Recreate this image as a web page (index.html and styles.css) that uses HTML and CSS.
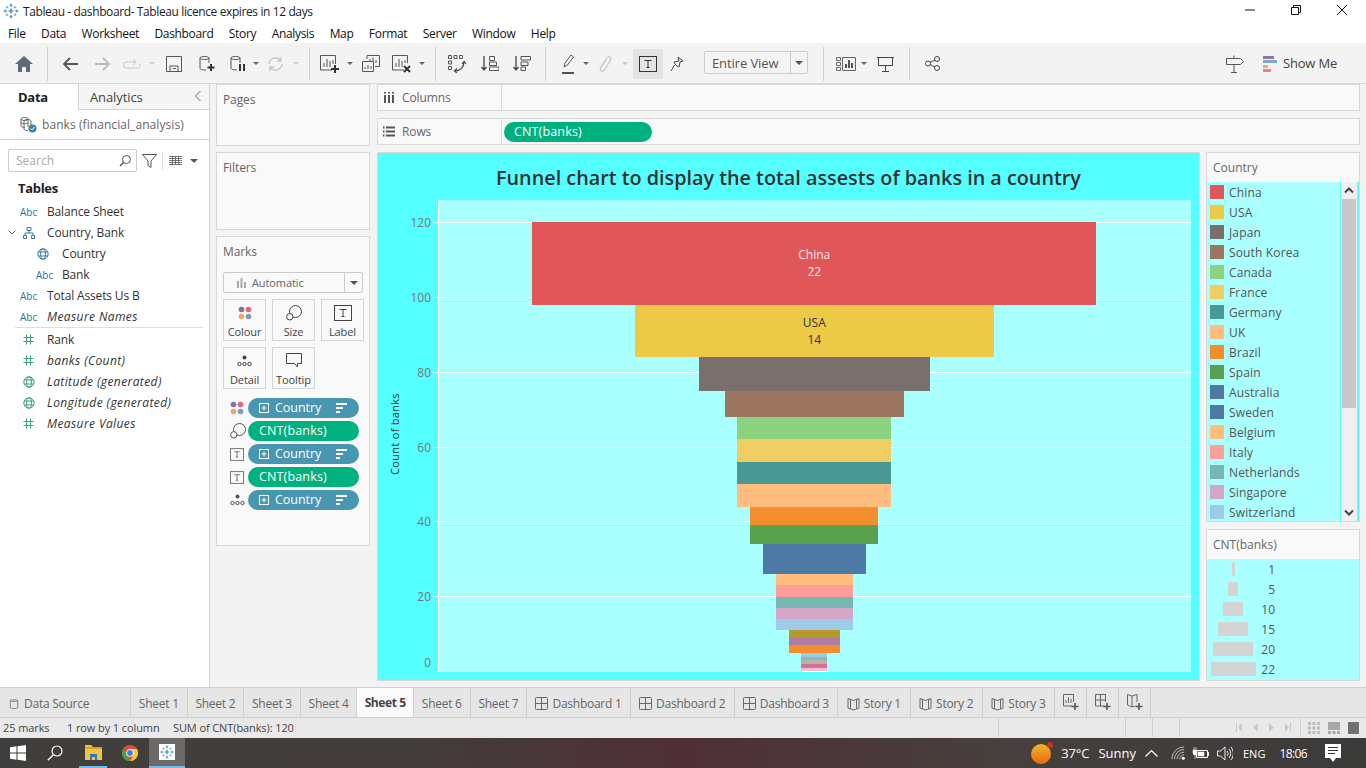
FILE: index.html
```html
<!DOCTYPE html>
<html lang="en">

<head>
    <meta charset="UTF-8">
    <meta name="viewport" content="width=device-width, initial-scale=1.0">
    <title>Tableau - dashboard</title>
    <link rel="stylesheet" href="styles.css">
</head>

<body>
    <!-- shared icons -->
    <svg class="sprite" xmlns="http://www.w3.org/2000/svg">
        <symbol id="i-logo" viewBox="0 0 16 16">
            <path d="M8 5.500v5M5.500 8h5" fill="none" stroke="#2f7ca8" stroke-width="1.2"/>
            <path d="M8 .5v3.500M6.500 2.200h3M8 12v3.500M6.500 13.800h3M.5 8h3.500M2.200 6.500v3M12 8h3.500M13.800 6.500v3" fill="none" stroke="#3f8cb8" stroke-width="1"/>
            <path d="M4 3v2.500M2.800 4.200h2.500M12 3v2.500M10.800 4.200h2.500M4 10.500V13M2.800 11.800h2.500M12 10.500V13M10.800 11.800h2.500" fill="none" stroke="#6aa9cc" stroke-width="1"/>
        </symbol>
        <symbol id="i-db" viewBox="0 0 16 16">
            <path d="M3 3.500C3 2 13 2 13 3.500V13C13 14.500 3 14.500 3 13ZM3 3.500C3 5 13 5 13 3.500" fill="none" stroke="currentColor"/>
        </symbol>
        <symbol id="i-t" viewBox="0 0 18 16">
            <rect x=".5" y=".5" width="17" height="15" fill="none" stroke="currentColor"/>
            <path d="M5.500 4.500h7M9 4.500v7M7.500 11.500h3" fill="none" stroke="currentColor"/>
        </symbol>
        <symbol id="i-dots" viewBox="0 0 14 14">
            <circle cx="3.500" cy="3.500" r="2.800" fill="#8a6f9c"/><circle cx="10.500" cy="3.500" r="2.800" fill="#e8657a"/>
            <circle cx="3.500" cy="10.500" r="2.800" fill="#f0a46c"/><circle cx="10.500" cy="10.500" r="2.800" fill="#7c9cc4"/>
        </symbol>
        <symbol id="i-size" viewBox="0 0 16 16">
            <circle cx="9.500" cy="6.500" r="6" fill="none" stroke="currentColor"/>
            <circle cx="3.800" cy="11.800" r="3.200" fill="#f9f9f9" stroke="currentColor"/>
        </symbol>
        <symbol id="i-detail" viewBox="0 0 15 12">
            <circle cx="7.500" cy="2.500" r="2" fill="currentColor"/>
            <circle cx="2.500" cy="9" r="1.700" fill="none" stroke="currentColor"/><circle cx="7.500" cy="9" r="1.700" fill="none" stroke="currentColor"/><circle cx="12.500" cy="9" r="1.700" fill="none" stroke="currentColor"/>
        </symbol>
        <symbol id="i-sorted" viewBox="0 0 12 10">
            <path d="M0 1h11M0 5h7M0 9h4" fill="none" stroke="#fff" stroke-width="2"/>
        </symbol>
        <symbol id="i-plusbox" viewBox="0 0 10 10">
            <rect x=".5" y=".5" width="9" height="9" fill="none" stroke="#fff"/>
            <path d="M5 2.500v5M2.500 5h5" fill="none" stroke="#fff"/>
        </symbol>
        <symbol id="i-globe" viewBox="0 0 12 12">
            <circle cx="6" cy="6" r="5.200" fill="none" stroke="currentColor"/>
            <ellipse cx="6" cy="6" rx="2.400" ry="5.200" fill="none" stroke="currentColor"/>
            <path d="M1 4h10M1 8h10" fill="none" stroke="currentColor"/>
        </symbol>
        <symbol id="i-hash" viewBox="0 0 11 11">
            <path d="M3.500 .5v10M7.500 .5v10M.5 3.500h10M.5 7.500h10" fill="none" stroke="currentColor"/>
        </symbol>
        <symbol id="i-dash" viewBox="0 0 13 13">
            <rect x=".5" y=".5" width="12" height="12" rx="1" fill="none" stroke="currentColor"/>
            <path d="M6.500 .5v12M.5 6.500h12" fill="none" stroke="currentColor"/>
        </symbol>
        <symbol id="i-book" viewBox="0 0 13 14">
            <path d="M1 1.500L6.500 3.500L12 1.500V11L6.500 13L1 11ZM3.500 2.500V11.500M9.500 2.500V11.500" fill="none" stroke="currentColor"/>
        </symbol>
    </svg>

    <div class="app">
        <header class="titlebar">
            <svg class="logo"><use href="#i-logo"/></svg>
            <span class="title-text">Tableau - dashboard- Tableau licence expires in 12 days</span>
            <div class="win-buttons">
                <svg width="12" height="12" viewBox="0 0 12 12"><path d="M1 6h10" stroke="#111"/></svg>
                <svg width="12" height="12" viewBox="0 0 12 12"><path d="M1.500 3.500h7v7h-7zM3.500 3.500v-2h7v7h-2" fill="none" stroke="#111"/></svg>
                <svg width="12" height="12" viewBox="0 0 12 12"><path d="M1 1l10 10M11 1L1 11" stroke="#111"/></svg>
            </div>
        </header>

        <nav class="menubar">
            <span>File</span><span>Data</span><span>Worksheet</span><span>Dashboard</span><span>Story</span><span>Analysis</span><span>Map</span><span>Format</span><span>Server</span><span>Window</span><span>Help</span>
        </nav>

        <div class="toolbar">
            <div class="tb w48"><svg width="18" height="16" viewBox="0 0 18 16"><path d="M9 0L0 8h3v8h4v-5h4v5h4V8h3z" fill="#5b6b7a"/></svg></div>
            <i class="tb-sep"></i>
            <div class="tb w6"></div>
            <div class="tb w32"><svg width="17" height="14" viewBox="0 0 17 14"><path d="M16 7H2M8 1L2 7l6 6" fill="none" stroke="#555" stroke-width="1.800"/></svg></div>
            <div class="tb w32"><svg width="17" height="14" viewBox="0 0 17 14"><path d="M1 7h14M9 1l6 6-6 6" fill="none" stroke="#bbb" stroke-width="1.800"/></svg></div>
            <div class="tb w28"><svg width="18" height="10" viewBox="0 0 18 10"><path d="M12 3H3.500a2.500 2.500 0 0 0 0 6h11a2.500 2.500 0 0 0 2-4M10 0l3 3-3 3" fill="none" stroke="#c4c4c4"/></svg></div>
            <div class="tb w12"><i class="caret off"></i></div>
            <div class="tb w32"><svg width="16" height="16" viewBox="0 0 16 16"><path d="M.5.500h15v15H.5zM4 15.500V10h8v5.500M7 12.500h3" fill="none" stroke="#555"/></svg></div>
            <div class="tb w34"><svg width="16" height="17" viewBox="0 0 16 17"><path d="M1 3C1 1 10 1 10 3V8M1 3C1 5 10 5 10 3M1 3V13C1 14.500 4 15 7 15" fill="none" stroke="#555"/><path d="M12 9v7M8.500 12.500h7" stroke="#333" stroke-width="2"/></svg></div>
            <div class="tb w28"><svg width="16" height="17" viewBox="0 0 16 17"><path d="M1 3C1 1 10 1 10 3V8M1 3C1 5 10 5 10 3M1 3V13C1 14.500 4 15 7 15" fill="none" stroke="#555"/><path d="M10 9v7M14 9v7" stroke="#333" stroke-width="2"/></svg></div>
            <div class="tb w8"><i class="caret"></i></div>
            <div class="tb w30"><svg width="17" height="16" viewBox="0 0 17 16"><path d="M2 8a6.500 6.500 0 0 1 12-3M15 8a6.500 6.500 0 0 1-12 3M14 1v4h-4M3 15v-4h4" fill="none" stroke="#c4c4c4" stroke-width="1.300"/></svg></div>
            <div class="tb w12"><i class="caret off"></i></div>
            <div class="tb w7"></div>
            <i class="tb-sep"></i>

            <div class="tb w4"></div>
            <div class="tb w32"><svg width="20" height="18" viewBox="0 0 20 18"><path d="M12 15H.5V.5h15V9M4 12V8M7 12V4M10 12V6M13 9V5" fill="none" stroke="#555"/><path d="M15 10v8M11 14h8" stroke="#333" stroke-width="2"/></svg></div>
            <div class="tb w8"><i class="caret"></i></div>
            <div class="tb w34"><svg width="18" height="17" viewBox="0 0 18 17"><path d="M5 4V.5h12.500v11H13M8 8V4M11 8V2.500M14 8V5" fill="none" stroke="#555"/><path d="M.5 6.500h11v10H.5zM3 14v-2M6 14v-4M9 14v-3" fill="#f3f3f3" stroke="#555"/></svg></div>
            <div class="tb w28"><svg width="20" height="18" viewBox="0 0 20 18"><path d="M12 15H.5V.5h15V8M4 12V8M7 12V4M10 12V6M13 8V5" fill="none" stroke="#555"/><path d="M12 11l6 6M18 11l-6 6" stroke="#333" stroke-width="2"/></svg></div>
            <div class="tb w12"><i class="caret"></i></div>
            <div class="tb w7"></div>
            <i class="tb-sep"></i>

            <div class="tb w5"></div>
            <div class="tb w32"><svg width="18" height="18" viewBox="0 0 18 18"><path d="M.5.500h3v3h-3zM6 .5h3v3H6zM11.500.5h3v3h-3zM.5 6h3v3h-3zM.5 11.500h3v3h-3z" fill="none" stroke="#555"/><path d="M16 7a9 9 0 0 1-9 9M14 9l2-2.500L18 9M9 13.500L6.500 16 9 18" fill="none" stroke="#444" stroke-width="1.200"/></svg></div>
            <div class="tb w34"><svg width="18" height="17" viewBox="0 0 18 17"><path d="M3 1v14M.5 12L3 15l2.500-3" fill="none" stroke="#444" stroke-width="1.300"/><path d="M8.500 1.500h5v4h-5zM8.500 7h7v3.500h-7zM8.500 12h9.500v3.500H8.500z" fill="none" stroke="#555"/></svg></div>
            <div class="tb w30"><svg width="18" height="17" viewBox="0 0 18 17"><path d="M3 1v14M.5 12L3 15l2.500-3" fill="none" stroke="#444" stroke-width="1.300"/><path d="M8 1.500h9.500V5H8zM8 7h7v3.500H8zM8 12h4.500v3.500H8z" fill="none" stroke="#555"/></svg></div>
            <div class="tb w8"></div>
            <i class="tb-sep"></i>

            <div class="tb w8"></div>
            <div class="tb w28"><svg width="14" height="20" viewBox="0 0 14 20"><path d="M3 13l1-4 6-8 2.500 2-6 8z" fill="none" stroke="#555"/><path d="M1 19h12" stroke="#555" stroke-width="2"/></svg></div>
            <div class="tb w8"><i class="caret"></i></div>
            <div class="tb w30"><svg width="15" height="18" viewBox="0 0 15 18"><path d="M3.500 11L9 3c1.700-2.500 5-.7 3.500 2L6.500 15c-1.500 2.500-5.500.5-4-2.200L8 5" fill="none" stroke="#c4c4c4" stroke-width="1.200"/></svg></div>
            <div class="tb w10"><i class="caret off"></i></div>
            <div class="tb tb-active"><svg class="ic-t" width="18" height="16"><use href="#i-t"/></svg></div>
            <div class="tb w28"><svg width="14" height="16" viewBox="0 0 14 16"><path d="M8 1l5 4-3 1-1 5-2-1-2-2-1-2 5-1zM4.500 9L1 15" fill="none" stroke="#444"/></svg></div>
            <div class="fit-select"><span>Entire View</span><b><i class="caret dark"></i></b></div>
            <div class="tb w15"></div>
            <i class="tb-sep"></i>

            <div class="tb w8"></div>
            <div class="tb w28"><svg width="20" height="14" viewBox="0 0 20 14"><path d="M.5.500h4v3h-4zM.5 5.500h4v3h-4zM.5 10.500h4v3h-4zM6.500.5h13v13h-13z" fill="none" stroke="#666"/><path d="M10 11V7M13 11V3M16 11V6" stroke="#555" stroke-width="2"/></svg></div>
            <div class="tb w8"><i class="caret"></i></div>
            <div class="tb w34"><svg width="17" height="16" viewBox="0 0 17 16"><path d="M0 1.500h17M1.500 1.500v8h14v-8M8.500 9.500V15M5 15.500h7" fill="none" stroke="#444"/></svg></div>
            <div class="tb w7"></div>
            <i class="tb-sep"></i>

            <div class="tb w6"></div>
            <div class="tb w32"><svg width="15" height="15" viewBox="0 0 15 15"><circle cx="3" cy="7.500" r="2.500" fill="none" stroke="#444"/><circle cx="12" cy="3" r="2.500" fill="none" stroke="#444"/><circle cx="12" cy="12" r="2.500" fill="none" stroke="#444"/><path d="M5 6.500L10 4M5 8.500l5 2.500" stroke="#444"/></svg></div>

            <div class="toolbar-right">
                <svg width="18" height="18" viewBox="0 0 18 18"><path d="M.5 3.500h14l3 3-3 3H.5zM8 .5v3M8 9.500v8M5 17.500h6" fill="none" stroke="#555"/></svg>
                <svg class="showme-ic" width="14" height="16" viewBox="0 0 14 16"><path d="M0 0h11v3H0z" fill="#8a7aa6"/><path d="M0 4h14v3H0z" fill="#7fa6cf"/><path d="M0 9h5v3H0z" fill="#f0a878"/><path d="M0 13h8v3H0z" fill="#f07f86"/></svg>
                <span>Show Me</span>
            </div>
        </div>

        <main class="main">
            <!-- Data pane -->
            <aside class="data-pane">
                <div class="pane-tabs">
                    <div class="pane-tab active">Data</div>
                    <div class="pane-tab">Analytics<svg class="collapse" width="8" height="12" viewBox="0 0 8 12"><path d="M6.500 1L1.500 6l5 5" fill="none" stroke="#666"/></svg></div>
                </div>
                <div class="source">
                    <svg width="17" height="17" viewBox="0 0 17 17"><path d="M1 3C1 1 8 1 8 3V11M1 3V10C1 11 3 11.500 5 11.500M1 3C1 5 8 5 8 3M1 6.500C1 8 5 8 8 7" fill="none" stroke="#666"/><path d="M4 5C4 3 11 3 11 5V10M4 5V13C4 14 6 14.500 8 14.500" fill="none" stroke="#666"/><circle cx="12.500" cy="12.500" r="4" fill="#3b84a8"/><path d="M10.500 12.500l1.500 1.500 2.500-3" fill="none" stroke="#fff"/></svg>
                    <span>banks (financial_analysis)</span>
                </div>
                <div class="search-row">
                    <div class="search"><span>Search</span><svg width="13" height="13" viewBox="0 0 13 13"><circle cx="7.500" cy="5.500" r="4" fill="none" stroke="#555"/><path d="M4.500 8.500L1 12" stroke="#555" stroke-width="1.400"/></svg></div>
                    <svg class="funnel-ic" width="15" height="14" viewBox="0 0 15 14"><path d="M.5.500h14L9 7v6.500L6 11.500V7z" fill="none" stroke="#555"/></svg>
                    <i class="search-sep"></i>
                    <svg width="13" height="9" viewBox="0 0 13 9"><path d="M0 .5h13M0 2.500h13M0 4.500h13M0 6.500h13M0 8.500h13M3.500 0v9M6.500 0v9M9.500 0v9" stroke="#555" fill="none" stroke-width=".8"/></svg>
                    <i class="caret dark list-caret"></i>
                </div>
                <h3 class="tables">Tables</h3>
                <ul class="fields">
                    <li><span class="abc">Abc</span>Balance Sheet</li>
                    <li class="has-chevron"><svg class="chev" width="8" height="5" viewBox="0 0 8 5"><path d="M.5.500L4 4 7.500.5" fill="none" stroke="#666"/></svg><svg class="ficon blue" width="12" height="12" viewBox="0 0 12 12"><path d="M4 .5h4v3H4zM.5 8.500h3v3h-3zM8.500 8.500h3v3h-3zM6 3.500V6M2 8.500V6h8v2.500" fill="none" stroke="currentColor"/></svg>Country, Bank</li>
                    <li class="child"><svg class="ficon blue" width="12" height="12"><use href="#i-globe"/></svg>Country</li>
                    <li class="child"><span class="abc">Abc</span>Bank</li>
                    <li><span class="abc">Abc</span>Total Assets Us B</li>
                    <li class="calc"><span class="abc">Abc</span>Measure Names</li>
                    <li class="divider"></li>
                    <li><svg class="ficon green" width="11" height="11"><use href="#i-hash"/></svg>Rank</li>
                    <li class="calc"><svg class="ficon green" width="11" height="11"><use href="#i-hash"/></svg>banks (Count)</li>
                    <li class="calc"><svg class="ficon green" width="12" height="12"><use href="#i-globe"/></svg>Latitude (generated)</li>
                    <li class="calc"><svg class="ficon green" width="12" height="12"><use href="#i-globe"/></svg>Longitude (generated)</li>
                    <li class="calc"><svg class="ficon green" width="11" height="11"><use href="#i-hash"/></svg>Measure Values</li>
                </ul>
            </aside>

            <!-- Pages / Filters / Marks -->
            <section class="cards">
                <div class="card pages">Pages</div>
                <div class="card filters">Filters</div>
                <div class="card marks">
                    <div class="marks-title">Marks</div>
                    <div class="mark-type">
                        <svg width="11" height="10" viewBox="0 0 11 10"><path d="M1 3h2v7H1zM4.500 0h2v10h-2zM8 4h2v6H8z" fill="#aaa"/></svg>
                        <span>Automatic</span><b><i class="caret dark"></i></b>
                    </div>
                    <div class="mark-buttons">
                        <div class="mark-btn"><svg width="14" height="14"><use href="#i-dots"/></svg>Colour</div>
                        <div class="mark-btn"><svg width="16" height="16"><use href="#i-size"/></svg>Size</div>
                        <div class="mark-btn"><svg width="18" height="16"><use href="#i-t"/></svg>Label</div>
                        <div class="mark-btn"><svg width="15" height="12"><use href="#i-detail"/></svg>Detail</div>
                        <div class="mark-btn"><svg width="16" height="15" viewBox="0 0 16 15"><path d="M.5.500h15v10h-4v3.500l-3-3.500H.5z" fill="none" stroke="currentColor"/></svg>Tooltip</div>
                    </div>
                    <ul class="mark-pills">
                        <li><svg width="14" height="14"><use href="#i-dots"/></svg><span class="pill dim"><svg class="pb" width="10" height="10"><use href="#i-plusbox"/></svg>Country<svg class="ps" width="12" height="10"><use href="#i-sorted"/></svg></span></li>
                        <li><svg width="16" height="16"><use href="#i-size"/></svg><span class="pill meas">CNT(banks)</span></li>
                        <li><svg width="14" height="13"><use href="#i-t"/></svg><span class="pill dim"><svg class="pb" width="10" height="10"><use href="#i-plusbox"/></svg>Country<svg class="ps" width="12" height="10"><use href="#i-sorted"/></svg></span></li>
                        <li><svg width="14" height="13"><use href="#i-t"/></svg><span class="pill meas">CNT(banks)</span></li>
                        <li><svg width="15" height="12"><use href="#i-detail"/></svg><span class="pill dim"><svg class="pb" width="10" height="10"><use href="#i-plusbox"/></svg>Country<svg class="ps" width="12" height="10"><use href="#i-sorted"/></svg></span></li>
                    </ul>
                </div>
            </section>

            <!-- Shelves and view -->
            <section class="work">
                <div class="shelf">
                    <div class="shelf-label"><svg width="12" height="11" viewBox="0 0 12 11"><path d="M2 3v8M6 3v8M10 3v8M2 0v1.500M6 0v1.500M10 0v1.500" stroke="#555" stroke-width="2"/></svg>Columns</div>
                    <div class="shelf-body"></div>
                </div>
                <div class="shelf">
                    <div class="shelf-label"><svg width="12" height="11" viewBox="0 0 12 11"><path d="M3 1.500h9M3 5.500h9M3 9.500h9M0 1.500h1.500M0 5.500h1.500M0 9.500h1.500" stroke="#555" stroke-width="2"/></svg>Rows</div>
                    <div class="shelf-body"><span class="pill meas wide">CNT(banks)</span></div>
                </div>

                <div class="view-row">
                    <div class="viz">
                        <h1 class="viz-title">Funnel chart to display the total assests of banks in a country</h1>
                        <div class="chart">
                            <div class="axis-title">Count of banks</div>
                            <div class="plot">
                                <div class="funnel">
                                    <div class="bar c1 lit" style="--n:22"><span>China</span><span>22</span></div>
                                    <div class="bar c2" style="--n:14"><span>USA</span><span>14</span></div>
                                    <div class="bar c3" style="--n:9"></div>
                                    <div class="bar c4" style="--n:7"></div>
                                    <div class="bar c5" style="--n:6"></div>
                                    <div class="bar c6" style="--n:6"></div>
                                    <div class="bar c7" style="--n:6"></div>
                                    <div class="bar c8" style="--n:6"></div>
                                    <div class="bar c9" style="--n:5"></div>
                                    <div class="bar c10" style="--n:5"></div>
                                    <div class="bar c11" style="--n:4"></div>
                                    <div class="bar c11" style="--n:4"></div>
                                    <div class="bar c8" style="--n:3"></div>
                                    <div class="bar c14" style="--n:3"></div>
                                    <div class="bar c15" style="--n:3"></div>
                                    <div class="bar c16" style="--n:3"></div>
                                    <div class="bar c17" style="--n:3"></div>
                                    <div class="bar c18" style="--n:2"></div>
                                    <div class="bar c19" style="--n:2"></div>
                                    <div class="bar c9" style="--n:2"></div>
                                    <div class="bar c17" style="--n:1"></div>
                                    <div class="bar c20" style="--n:1"></div>
                                    <div class="bar c21" style="--n:1"></div>
                                    <div class="bar c22" style="--n:1"></div>
                                    <div class="bar c23" style="--n:1"></div>
                                </div>
                            </div>
                            <!-- axis ticks lie over the plot -->
                            <div class="grid" style="top:22px"><span>120</span></div>
                            <div class="grid" style="top:97px"><span>100</span></div>
                            <div class="grid" style="top:172px"><span>80</span></div>
                            <div class="grid" style="top:247px"><span>60</span></div>
                            <div class="grid" style="top:321px"><span>40</span></div>
                            <div class="grid" style="top:396px"><span>20</span></div>
                            <div class="grid last" style="top:471px"><span>0</span></div>
                        </div>
                    </div>

                    <div class="legends">
                        <div class="legend country">
                            <div class="legend-title">Country</div>
                            <div class="legend-body">
                                <ul class="legend-list">
                                    <li><i class="c1"></i>China</li>
                                    <li><i class="c2"></i>USA</li>
                                    <li><i class="c3"></i>Japan</li>
                                    <li><i class="c4"></i>South Korea</li>
                                    <li><i class="c5"></i>Canada</li>
                                    <li><i class="c6"></i>France</li>
                                    <li><i class="c7"></i>Germany</li>
                                    <li><i class="c8"></i>UK</li>
                                    <li><i class="c9"></i>Brazil</li>
                                    <li><i class="c10"></i>Spain</li>
                                    <li><i class="c11"></i>Australia</li>
                                    <li><i class="c11"></i>Sweden</li>
                                    <li><i class="c8"></i>Belgium</li>
                                    <li><i class="c14"></i>Italy</li>
                                    <li><i class="c15"></i>Netherlands</li>
                                    <li><i class="c16"></i>Singapore</li>
                                    <li><i class="c17"></i>Switzerland</li>
                                </ul>
                                <div class="scrollbar">
                                    <svg width="16" height="17" viewBox="0 0 16 17"><path d="M4 10.500l4-4 4 4" fill="none" stroke="#444" stroke-width="2"/></svg>
                                    <div class="thumb"></div>
                                    <svg class="down" width="16" height="17" viewBox="0 0 16 17"><path d="M4 6.500l4 4 4-4" fill="none" stroke="#444" stroke-width="2"/></svg>
                                </div>
                            </div>
                        </div>
                        <div class="legend sizes">
                            <div class="legend-title">CNT(banks)</div>
                            <ul class="size-list">
                                <li><span class="size-cell"><i style="width:3px"></i></span><b>1</b></li>
                                <li><span class="size-cell"><i style="width:10px"></i></span><b>5</b></li>
                                <li><span class="size-cell"><i style="width:20px"></i></span><b>10</b></li>
                                <li><span class="size-cell"><i style="width:30px"></i></span><b>15</b></li>
                                <li><span class="size-cell"><i style="width:40px"></i></span><b>20</b></li>
                                <li><span class="size-cell"><i style="width:45px"></i></span><b>22</b></li>
                            </ul>
                        </div>
                    </div>
                </div>
            </section>
        </main>

        <!-- Sheet tabs -->
        <div class="tabs">
            <div class="tab t-source"><svg width="12" height="14"><use href="#i-db"/></svg>Data Source</div>
            <div class="tab t-sheet">Sheet 1</div>
            <div class="tab t-sheet">Sheet 2</div>
            <div class="tab t-sheet">Sheet 3</div>
            <div class="tab t-sheet">Sheet 4</div>
            <div class="tab t-sheet current">Sheet 5</div>
            <div class="tab t-sheet">Sheet 6</div>
            <div class="tab t-sheet">Sheet 7</div>
            <div class="tab t-dash"><svg width="13" height="13"><use href="#i-dash"/></svg>Dashboard 1</div>
            <div class="tab t-dash"><svg width="13" height="13"><use href="#i-dash"/></svg>Dashboard 2</div>
            <div class="tab t-dash"><svg width="13" height="13"><use href="#i-dash"/></svg>Dashboard 3</div>
            <div class="tab t-story"><svg width="13" height="14"><use href="#i-book"/></svg>Story 1</div>
            <div class="tab t-story"><svg width="13" height="14"><use href="#i-book"/></svg>Story 2</div>
            <div class="tab t-story"><svg width="13" height="14"><use href="#i-book"/></svg>Story 3</div>
            <div class="tab t-add"><svg width="16" height="17" viewBox="0 0 16 17"><path d="M9 12H.5V.5h10V8M3 9V6M5.500 9V3M8 9V5" fill="none" stroke="#666"/><path d="M12 9v7M8.500 12.500h7" stroke="#555" stroke-width="1.600"/></svg></div>
            <div class="tab t-add"><svg width="16" height="17" viewBox="0 0 16 17"><path d="M9 12H.5V.5h10V8M5.500.5V12M.5 6h10" fill="none" stroke="#666"/><path d="M12 9v7M8.500 12.500h7" stroke="#555" stroke-width="1.600"/></svg></div>
            <div class="tab t-add"><svg width="16" height="17" viewBox="0 0 16 17"><path d="M.5.500L5 2l5-1.500V8M.5.500V11L5 13l3-1M5 2v11" fill="none" stroke="#666"/><path d="M12 9v7M8.500 12.500h7" stroke="#555" stroke-width="1.600"/></svg></div>
        </div>

        <!-- Status bar -->
        <div class="status">
            <span class="st-marks">25 marks</span>
            <span class="st-rows">1 row by 1 column</span>
            <span>SUM of CNT(banks): 120</span>
            <div class="status-cells"><i></i><i></i><i></i><i></i></div>
            <div class="status-nav">
                <svg width="6" height="9" viewBox="0 0 6 9"><path d="M0 0h1v9H0zM6 0v9L2 4.500z" fill="#c8c8c8"/></svg>
                <svg width="5" height="9" viewBox="0 0 5 9"><path d="M5 0v9L0 4.500z" fill="#c8c8c8"/></svg>
                <svg width="5" height="9" viewBox="0 0 5 9"><path d="M0 0v9l5-4.500z" fill="#c8c8c8"/></svg>
                <svg width="6" height="9" viewBox="0 0 6 9"><path d="M5 0h1v9H5zM0 0v9l4-4.500z" fill="#c8c8c8"/></svg>
            </div>
            <div class="status-views">
                <svg width="12" height="12" viewBox="0 0 12 12"><path d="M0 0h3v3H0zM4.500 0h3v3h-3zM9 0h3v3H9zM0 4.500h3v3H0zM4.500 4.500h3v3h-3zM9 4.500h3v3H9zM0 9h3v3H0zM4.500 9h3v3h-3zM9 9h3v3H9z" fill="#bdbdbd"/></svg>
                <svg width="12" height="12" viewBox="0 0 12 12"><path d="M0 0h12v8H0zM0 9h3v3H0zM4.500 9h3v3h-3zM9 9h3v3H9z" fill="#a8a8a8"/></svg>
                <svg width="11" height="12" viewBox="0 0 11 12"><path d="M0 0h11v12H0z" fill="#707070"/></svg>
            </div>
        </div>

        <!-- Windows taskbar -->
        <footer class="taskbar">
            <div class="task win"><svg width="16" height="16" viewBox="0 0 16 16"><path d="M0 2.300l6.500-1V7.500H0zM7.500 1.200L16 0v7.500H7.500zM0 8.500h6.500v6.200l-6.500-1zM7.500 8.500H16V16l-8.500-1.200z" fill="#fff"/></svg></div>
            <div class="task srch"><svg width="16" height="16" viewBox="0 0 16 16"><circle cx="10" cy="6" r="5" fill="none" stroke="#fff" stroke-width="1.200"/><path d="M6.300 9.700L.8 15.200" stroke="#fff" stroke-width="1.300"/></svg></div>
            <div class="task running folder"><svg width="17" height="15" viewBox="0 0 17 15"><path d="M0 0h6l2 2h9v13H0z" fill="#f3c440"/><path d="M0 2h17v2H0z" fill="#d9a520"/><path d="M5 9h7v6h-2v-3H7v3H5z" fill="#2a78c8"/></svg></div>
            <div class="task chrome"><svg width="16" height="16" viewBox="0 0 16 16"><circle cx="8" cy="8" r="8" fill="#dd4b3e"/><path d="M8 16A8 8 0 0 1 1 4l4 7z" fill="#3da54a"/><path d="M8 16a8 8 0 0 0 7-12H8l3 7z" fill="#f7c630"/><circle cx="8" cy="8" r="3.800" fill="#fff"/><circle cx="8" cy="8" r="2.900" fill="#3f7fe0"/></svg></div>
            <div class="task running selected"><span class="tile"><svg width="14" height="14"><use href="#i-logo"/></svg></span></div>

            <div class="tray">
                <svg class="weather" width="22" height="22" viewBox="0 0 22 22"><defs><linearGradient id="sun" x1="0" y1="0" x2="0" y2="1"><stop offset="0" stop-color="#f2b32a"/><stop offset="1" stop-color="#ea6a10"/></linearGradient></defs><circle cx="10" cy="12" r="10" fill="url(#sun)"/><circle cx="19" cy="3" r="3" fill="#c8321e"/></svg>
                <span class="temp">37°C</span>
                <span class="sky">Sunny</span>
                <svg class="up" width="13" height="8" viewBox="0 0 13 8"><path d="M.5 7.500l6-6 6 6" fill="none" stroke="#fff" stroke-width="1.200"/></svg>
                <svg class="wifi" width="14" height="14" viewBox="0 0 16 16"><path d="M1 15A14 14 0 0 1 15 1M4 15A11 11 0 0 1 15 4M7 15a8 8 0 0 1 8-8M10 15a5 5 0 0 1 5-5" fill="none" stroke="#dcdcdc" stroke-width=".9"/><circle cx="14" cy="14" r="1.800" fill="#fff"/></svg>
                <svg class="batt" width="17" height="15" viewBox="0 0 17 15"><path d="M4.500 4.500h11v7h-11z" fill="none" stroke="#fff"/><path d="M6 6h6v4H6zM16 6.500h1v3h-1zM1 4h4v3a2 2 0 0 1-4 0zM2 1v3M4 1v3M3 9v4" fill="#fff" stroke="#fff" stroke-width=".6"/></svg>
                <svg class="vol" width="16" height="15" viewBox="0 0 16 15"><path d="M.5 5h3L8 1v13L3.500 10h-3zM10 5a3.500 3.500 0 0 1 0 5M12 3a7 7 0 0 1 0 9M14 1a10 10 0 0 1 0 13" fill="none" stroke="#fff" stroke-width=".9"/></svg>
                <span class="lang">ENG</span>
                <span class="clock">18:06</span>
                <svg class="notes" width="16" height="18" viewBox="0 0 16 18"><path d="M0 0h16v14h-5l-3 4-3-4H0z" fill="#fff"/><path d="M3 3.500h10M3 6.500h10M3 9.500h7" stroke="#333"/></svg>
            </div>
        </footer>
    </div>
</body>

</html>
```

FILE: styles.css
```css
* {
    box-sizing: border-box;
}

html, body {
    margin: 0;
    padding: 0;
    overflow: hidden;
}

body {
    width: 1366px;
    height: 768px;
    font-family: "Open Sans", "Liberation Sans", sans-serif;
    font-size: 12px;
    color: #333;
    background-color: #f3f3f3;
}

ul {
    list-style: none;
    margin: 0;
    padding: 0;
}

.sprite {
    display: none;
}

.app {
    display: flex;
    flex-direction: column;
    height: 768px;
}

/* title + menu */
.titlebar {
    display: flex;
    align-items: center;
    height: 22px;
    padding-left: 3px;
    background-color: #fff;
    color: #222;
}

.logo {
    width: 16px;
    height: 16px;
    margin-right: 4px;
}

.title-text {
    letter-spacing: -0.39px;
}

.win-buttons {
    display: flex;
    gap: 34px;
    margin-left: auto;
    margin-right: 18px;
    padding-bottom: 2px;
}

.menubar {
    display: flex;
    gap: 15.4px;
    align-items: center;
    height: 21px;
    padding-top: 2px;
    padding-left: 8px;
    background-color: #fff;
    color: #111;
    letter-spacing: -0.32px;
}

/* toolbar */
.toolbar {
    display: flex;
    align-items: center;
    height: 41px;
    padding-top: 1px;
    border-bottom: 1px solid #d8d8d8;
    background-color: #f3f3f3;
}

.tb {
    display: flex;
    align-items: center;
    justify-content: center;
    flex: none;
    height: 30px;
}

.w4 { width: 4px; }
.w5 { width: 5px; }
.w6 { width: 6px; }
.w7 { width: 7px; }
.w8 { width: 8px; }
.w10 { width: 10px; }
.w12 { width: 12px; }
.w15 { width: 15px; }
.w28 { width: 28px; }
.w30 { width: 30px; }
.w32 { width: 32px; }
.w34 { width: 34px; }
.w48 { width: 47px; }

.tb-sep {
    flex: none;
    width: 1px;
    height: 34px;
    background-color: #cfcfcf;
}

.caret {
    display: block;
    width: 0;
    height: 0;
    border-left: 3px solid transparent;
    border-right: 3px solid transparent;
    border-top: 3px solid #666;
}

.caret.off {
    border-top-color: #c8c8c8;
}

.caret.dark {
    border-left-width: 4px;
    border-right-width: 4px;
    border-top: 4px solid #555;
}

.tb-active {
    width: 30px;
    margin-left: 3px;
    background-color: #e3e3e3;
}

.ic-t {
    color: #333;
}

.fit-select {
    display: flex;
    flex: none;
    align-items: center;
    width: 104px;
    height: 23px;
    margin-left: 13px;
    margin-bottom: 2px;
    border: 1px solid #ccc;
    border-radius: 2px;
    color: #555;
    font-size: 13px;
}

.fit-select span {
    width: 85px;
    padding-left: 7px;
    letter-spacing: -0.1px;
    white-space: nowrap;
}

.fit-select b {
    display: flex;
    align-items: center;
    justify-content: center;
    flex: 1;
    height: 100%;
    border-left: 1px solid #ccc;
}

.toolbar-right {
    display: flex;
    align-items: center;
    margin-left: auto;
    padding-right: 29px;
    color: #444;
    font-size: 13px;
    letter-spacing: -0.2px;
}

.toolbar-right span {
    margin-bottom: 2px;
}

.showme-ic {
    margin-left: 19px;
    margin-right: 6px;
}

/* main area */
.main {
    display: flex;
    flex: 1;
    min-height: 0;
}

.data-pane {
    flex: none;
    width: 210px;
    border-right: 1px solid #d4d4d4;
    background-color: #fff;
}

.pane-tabs {
    display: flex;
    height: 26px;
    font-size: 13px;
}

.pane-tab {
    display: flex;
    align-items: center;
    width: 78px;
    padding-left: 18px;
    font-weight: 700;
    color: #222;
    letter-spacing: -0.3px;
}

.pane-tab + .pane-tab {
    position: relative;
    flex: 1;
    padding-left: 11px;
    border-left: 1px solid #d4d4d4;
    border-bottom: 1px solid #d4d4d4;
    background-color: #f5f5f5;
    font-weight: 400;
    color: #444;
    letter-spacing: -0.1px;
}

.collapse {
    position: absolute;
    right: 7px;
    top: 6px;
}

.source {
    display: flex;
    align-items: center;
    gap: 5px;
    height: 30px;
    padding-left: 20px;
    border-bottom: 1px solid #d4d4d4;
    color: #666;
    letter-spacing: 0.07px;
}

.search-row {
    display: flex;
    align-items: center;
    height: 23px;
    margin-top: 9px;
    padding-left: 8px;
}

.search {
    display: flex;
    align-items: center;
    justify-content: space-between;
    width: 129px;
    height: 23px;
    padding: 0 4px 0 7px;
    border: 1px solid #ccc;
    border-radius: 2px;
    color: #aaa;
}

.funnel-ic {
    margin-left: 5px;
}

.search-sep {
    width: 1px;
    height: 18px;
    margin: 0 6px 0 5px;
    background-color: #ddd;
}

.list-caret {
    margin-left: 8px;
}

.tables {
    height: 20px;
    margin: 6px 0 3px;
    padding-left: 18px;
    font-size: 13px;
    line-height: 20px;
    font-weight: 700;
    color: #222;
    letter-spacing: -0.3px;
}

.fields li {
    position: relative;
    display: flex;
    align-items: center;
    height: 21px;
    padding-left: 47px;
    color: #333;
    letter-spacing: -0.15px;
    white-space: nowrap;
}

.fields .child {
    padding-left: 62px;
}

.fields .calc {
    font-style: italic;
    letter-spacing: 0.4px;
}

.fields .divider {
    height: 1px;
    margin: 0 6px 1px 15px;
    padding: 0;
    background-color: #ddd;
}

.abc {
    position: absolute;
    left: 20px;
    color: #2f7396;
    font-size: 10px;
    font-style: normal;
    letter-spacing: 0;
}

.child .abc {
    left: 36px;
}

.ficon {
    position: absolute;
    left: 23px;
}

.child .ficon {
    left: 37px;
}

.chev {
    position: absolute;
    left: 8px;
}

.blue { color: #3b7c9c; }
.green { color: #3fa37c; }

/* cards column */
.cards {
    display: flex;
    flex: none;
    flex-direction: column;
    gap: 6px;
    width: 167px;
    padding: 0 6px;
}

.card {
    width: 154px;
    border: 1px solid #d8d8d8;
    background-color: #f9f9f9;
    padding: 7px 6px;
    line-height: 16px;
    color: #666;
    letter-spacing: -0.1px;
}

.pages {
    height: 62px;
}

.filters {
    height: 78px;
}

.marks {
    height: 310px;
}

.marks-title {
    height: 17px;
    margin-bottom: 11px;
}

.mark-type {
    display: flex;
    align-items: center;
    width: 140px;
    height: 21px;
    padding-left: 12px;
    border: 1px solid #ccc;
    border-radius: 2px;
    color: #666;
    font-size: 11px;
}

.mark-type span {
    flex: 1;
    margin-left: 5px;
}

.mark-type b {
    display: flex;
    align-items: center;
    justify-content: center;
    width: 18px;
    height: 100%;
    border-left: 1px solid #ccc;
}

.mark-buttons {
    display: grid;
    grid-template-columns: repeat(3, 43px);
    gap: 6px;
    margin-top: 6px;
}

.mark-btn {
    display: grid;
    grid-template-rows: 25px 13px;
    align-content: start;
    justify-items: center;
    align-items: center;
    height: 42px;
    border: 1px solid #d4d4d4;
    color: #444;
    font-size: 11px;
    line-height: 13px;
    letter-spacing: -0.1px;
}

.mark-pills {
    display: flex;
    flex-direction: column;
    gap: 3px;
    margin-top: 9px;
    margin-right: 4px;
}

.mark-pills li {
    display: flex;
    align-items: center;
    height: 20px;
    color: #555;
}

.mark-pills li > svg {
    flex: none;
    margin-left: 7px;
    margin-right: auto;
}

.pill {
    display: flex;
    align-items: center;
    width: 111px;
    height: 20px;
    border-radius: 10px;
    padding-left: 11px;
    color: #fff;
    font-size: 12.5px;
    letter-spacing: -0.05px;
    white-space: nowrap;
}

.pill.meas {
    background-color: #00b180;
    letter-spacing: 0.15px;
}

.pill.dim {
    background-color: #4996b2;
}

.pill .pb {
    margin-right: 6px;
}

.pill .ps {
    margin-left: auto;
    margin-right: 11px;
}

/* shelves + view */
.work {
    display: flex;
    flex: 1;
    flex-direction: column;
    gap: 7px;
    min-width: 0;
    padding-right: 6px;
}

.shelf {
    display: flex;
    flex: none;
    height: 27px;
    border: 1px solid #d8d8d8;
    background-color: #f9f9f9;
}

.shelf-label {
    display: flex;
    align-items: center;
    gap: 7px;
    width: 124px;
    padding-left: 5px;
    border-right: 1px solid #d8d8d8;
    color: #666;
    letter-spacing: -0.1px;
}

.shelf-body {
    display: flex;
    align-items: center;
    flex: 1;
}

.pill.wide {
    width: 148px;
    margin-left: 2px;
    padding-left: 10px;
}

.view-row {
    display: flex;
    flex: none;
    gap: 6px;
    height: 529px;
}

.viz {
    flex: none;
    width: 823px;
    height: 529px;
    border: 1px solid #d8d8d8;
    background-color: #55ffff;
}

.viz-title {
    height: 47px;
    margin: 0;
    text-align: center;
    font-size: 19.8px;
    line-height: 50px;
    font-weight: 600;
    color: #333;
}

.chart {
    position: relative;
    height: 472px;
}

.axis-title {
    position: absolute;
    left: 8px;
    top: 234px;
    transform: translate(-50%, -50%) rotate(-90deg);
    margin-left: 8px;
    color: #333;
    font-size: 11px;
    letter-spacing: 0.3px;
    white-space: nowrap;
}

.plot {
    height: 472px;
    margin-left: 60px;
    margin-right: 8px;
    border-left: 1px solid #fff;
    background-color: #aaffff;
}

.funnel {
    display: flex;
    flex-direction: column;
    align-items: center;
    padding-top: 22.2px;
    padding-right: 1.4px;
}

.bar {
    position: relative;
    z-index: 1;
    display: flex;
    flex-direction: column;
    align-items: center;
    justify-content: center;
    flex: none;
    width: calc(var(--n) * 25.65px);
    height: calc(var(--n) * 3.745px);
    line-height: 17px;
    color: #333;
}

.bar.lit {
    color: #f4ecec;
}

.grid {
    position: absolute;
    left: 55px;
    right: 8px;
    height: 1px;
    background-color: #fff;
}

.grid span {
    position: absolute;
    right: 100%;
    top: -8px;
    width: 30px;
    margin-right: 2px;
    text-align: right;
    color: #777;
    line-height: 18px;
}

.grid.last span {
    top: -17px;
}

.c1 { background-color: #e15759; }
.c2 { background-color: #edc948; }
.c3 { background-color: #79706e; }
.c4 { background-color: #9c755f; }
.c5 { background-color: #8cd17d; }
.c6 { background-color: #f1ce63; }
.c7 { background-color: #499894; }
.c8 { background-color: #ffbe7d; }
.c9 { background-color: #f28e2b; }
.c10 { background-color: #59a14f; }
.c11 { background-color: #4e79a7; }
.c14 { background-color: #ff9d9a; }
.c15 { background-color: #76b7b2; }
.c16 { background-color: #d4a6c8; }
.c17 { background-color: #a0cbe8; }
.c18 { background-color: #b6992d; }
.c19 { background-color: #b07aa1; }
.c20 { background-color: #86bcb6; }
.c21 { background-color: #bab0ac; }
.c22 { background-color: #d37295; }
.c23 { background-color: #fabfd2; }

/* legends */
.legends {
    display: flex;
    flex: none;
    flex-direction: column;
    gap: 7px;
    width: 154px;
}

.legend {
    border: 1px solid #d8d8d8;
    background-color: #f9f9f9;
}

.legend-title {
    height: 29px;
    padding-left: 6px;
    color: #666;
    line-height: 30px;
}

.country {
    height: 370px;
}

.sizes {
    height: 152px;
}

.legend-body {
    display: flex;
    height: 339px;
    padding-right: 2px;
    background-color: #55ffff;
}

.legend-list {
    flex: none;
    width: 133px;
    padding-left: 3px;
    background-color: #aaffff;
}

.legend-list li {
    display: flex;
    align-items: center;
    gap: 5px;
    height: 20px;
    color: #555;
    letter-spacing: 0.15px;
    white-space: nowrap;
}

.legend-list i {
    width: 14px;
    height: 14px;
}

.scrollbar {
    display: flex;
    flex-direction: column;
    width: 16px;
    margin-left: auto;
    background-color: #f0f0f0;
}

.scrollbar svg {
    flex: none;
}

.thumb {
    height: 209px;
    margin: 0 1px;
    background-color: #c8c8c8;
}

.down {
    margin-top: auto;
}

.size-list {
    height: 121px;
    background-color: #aaffff;
}

.size-list li {
    display: flex;
    align-items: center;
    height: 20px;
}

.size-cell {
    display: flex;
    justify-content: center;
    width: 52px;
}

.size-cell i {
    height: 14px;
    background-color: #d4d4d4;
}

.size-list b {
    width: 16px;
    text-align: right;
    color: #555;
    font-weight: 400;
}

/* sheet tabs */
.tabs {
    display: flex;
    flex: none;
    height: 31px;
    border-top: 1px solid #d0d0d0;
    border-bottom: 1px solid #d0d0d0;
    background-color: #e6e6e6;
    color: #666;
    letter-spacing: -0.25px;
}

.tab {
    display: flex;
    align-items: center;
    justify-content: center;
    gap: 4px;
    flex: none;
    padding-top: 2px;
    border-right: 1px solid #d0d0d0;
    white-space: nowrap;
}

.t-source {
    justify-content: flex-start;
    width: 131px;
    padding-left: 8px;
    gap: 4px;
}

.t-sheet { width: 56.6px; }
.t-dash { width: 103.7px; }
.t-story { width: 72.3px; }
.t-add { width: 32px; padding-top: 0; }

.tab.current {
    padding-top: 0;
    padding-bottom: 1px;
    background-color: #fbfbfb;
    color: #444;
    font-weight: 700;
    letter-spacing: -0.4px;
}

/* status bar */
.status {
    display: flex;
    flex: none;
    align-items: center;
    height: 20px;
    padding-left: 3px;
    padding-bottom: 1px;
    background-color: #e9e9e9;
    color: #444;
    font-size: 11px;
    letter-spacing: -0.1px;
}

.st-marks {
    width: 64px;
}

.st-rows {
    width: 106px;
}

.status-cells {
    display: flex;
    margin-left: auto;
    height: 100%;
}

.status-cells i {
    width: 27px;
    border-left: 1px solid #d0d0d0;
}

.status-cells i:first-child {
    width: 127px;
}

.status-cells i:last-child {
    width: 50px;
}

.status-nav {
    display: flex;
    gap: 11px;
    width: 72px;
    align-items: center;
    padding-left: 7px;
    border-right: 1px solid #d4d4d4;
    height: 100%;
}

.status-views {
    display: flex;
    align-items: center;
    gap: 8px;
    width: 65px;
    padding-left: 7px;
}

/* windows taskbar */
.taskbar {
    display: flex;
    flex: none;
    align-items: center;
    height: 30px;
    color: #fff;
    background: linear-gradient(90deg, #403e3c 0, #433d3a 420px, #4f2f36 680px, #47403d 1000px, #3b3b3a 1366px);
}

.task {
    display: flex;
    align-items: center;
    justify-content: center;
    height: 30px;
}

.win { width: 36px; }
.srch { width: 37px; }
.folder { width: 28px; margin-left: 6px; }
.chrome { width: 36px; margin-left: 5px; }

.running {
    border-bottom: 2px solid #76b9ed;
}

.selected {
    width: 36px;
    margin-left: 1px;
    background-color: #6b6966;
}

.tile {
    display: flex;
    align-items: center;
    justify-content: center;
    width: 16px;
    height: 16px;
    background-color: #fff;
}

.tray {
    display: flex;
    align-items: center;
    margin-left: auto;
    height: 30px;
    padding-right: 25px;
    font-size: 13px;
}

.temp {
    margin-left: 8px;
    letter-spacing: -0.1px;
}

.sky {
    margin-left: 9px;
}

.up {
    margin-left: 9px;
}

.wifi {
    margin-left: 13px;
}

.batt {
    margin-left: 7px;
}

.vol {
    margin-left: 8px;
}

.lang {
    margin-left: 10px;
    font-size: 11px;
}

.clock {
    margin-left: 14px;
    font-size: 12px;
    letter-spacing: -0.6px;
}

.notes {
    margin-left: 18px;
}
```
